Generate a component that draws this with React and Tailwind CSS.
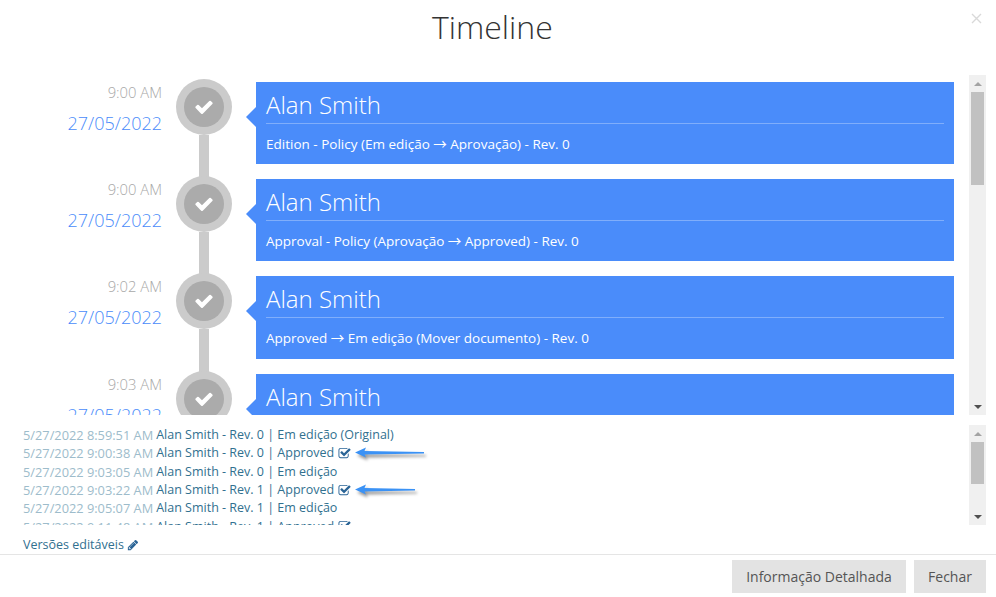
import React from 'react';

const events = [
    { time: '9:00 AM', parts: ['Edition - Policy (Em edição ', ' Aprovação) - Rev. 0'] },
    { time: '9:00 AM', parts: ['Approval - Policy (Aprovação ', ' Approved) - Rev. 0'] },
    { time: '9:02 AM', parts: ['Approved ', ' Em edição (Mover documento) - Rev. 0'] },
    { time: '9:03 AM', parts: ['Em edição - Policy - Rev. 1'] },
];

const versions = [
    { date: '5/27/2022 8:59:51 AM', info: 'Alan Smith - Rev. 0 | Em edição (Original)' },
    { date: '5/27/2022 9:00:38 AM', info: 'Alan Smith - Rev. 0 | Approved', approved: true, arrow: 70 },
    { date: '5/27/2022 9:03:05 AM', info: 'Alan Smith - Rev. 0 | Em edição' },
    { date: '5/27/2022 9:03:22 AM', info: 'Alan Smith - Rev. 1 | Approved', approved: true, arrow: 61 },
    { date: '5/27/2022 9:05:07 AM', info: 'Alan Smith - Rev. 1 | Em edição' },
    { date: '5/27/2022 9:11:48 AM', info: 'Alan Smith - Rev. 1 | Approved', approved: true },
];

const CheckIcon = ({ className }) => (
    <svg viewBox="0 0 1792 1792" fill="currentColor" className={className}>
        <path d="M1671 566q0 40-28 68l-724 724-136 136q-28 28-68 28t-68-28l-136-136-362-362q-28-28-28-68t28-68l136-136q28-28 68-28t68 28l294 295 656-657q28-28 68-28t68 28l136 136q28 28 28 68z" />
    </svg>
);

const CheckSquareIcon = ({ className }) => (
    <svg viewBox="0 0 1792 1792" fill="currentColor" className={className}>
        <path d="M1472 930v318q0 119-84.5 203.5t-203.5 84.5h-832q-119 0-203.5-84.5t-84.5-203.5v-832q0-119 84.5-203.5t203.5-84.5h832q63 0 117 25 15 7 18 23 3 17-9 29l-49 49q-10 10-23 10-3 0-9-2-23-6-45-6h-832q-66 0-113 47t-47 113v832q0 66 47 113t113 47h832q66 0 113-47t47-113v-254q0-13 9-22l64-64q10-10 23-10 6 0 12 3 20 8 20 29zm231-489l-814 814q-24 24-57 24t-57-24l-430-430q-24-24-24-57t24-57l110-110q24-24 57-24t57 24l263 263 647-647q24-24 57-24t57 24l110 110q24 24 24 57t-24 57z" />
    </svg>
);

const PencilIcon = ({ className }) => (
    <svg viewBox="0 0 1792 1792" fill="currentColor" className={className}>
        <path d="M491 1536l91-91-235-235-91 91v107h128v128h107zm523-928q0-22-22-22-10 0-17 7l-542 542q-7 7-7 17 0 22 22 22 10 0 17-7l542-542q7-7 7-17zm-54-192l416 416-832 832h-416v-416zm683 96q0 53-37 90l-166 166-416-416 166-165q36-38 90-38 53 0 91 38l235 234q37 39 37 91z" />
    </svg>
);

const Scrollbar = ({ thumbHeight }) => (
    <div className="w-[17px] shrink-0 bg-[#f0f0f0] flex flex-col items-center">
        <div className="h-[17px] w-full flex items-center justify-center shrink-0">
            <div className="w-0 h-0 border-x-[4px] border-x-transparent border-b-[4px] border-b-[#a3a3a3]" />
        </div>
        <div className={`w-[13px] bg-[#c1c1c1] shrink-0 ${thumbHeight}`} />
        <div className="flex-1" />
        <div className="h-[17px] w-full flex items-center justify-center shrink-0">
            <div className="w-0 h-0 border-x-[4px] border-x-transparent border-t-[4px] border-t-[#505050]" />
        </div>
    </div>
);

// hand drawn annotation arrow with its soft shadow
const Arrow = ({ width }) => (
    <svg
        width={width + 4}
        height="14"
        viewBox={`0 0 ${width + 4} 14`}
        className="ml-[4px] shrink-0 overflow-visible drop-shadow-[2px_3px_1.5px_rgba(0,0,0,0.4)]"
    >
        <path d={`M0 6.5 L11 1.5 L9.5 5 L${width - 1} 6 L${width - 1} 7.5 L9.5 8.5 L11 11.5 Z`} fill="#3b92f5" />
    </svg>
);

const App = () => {
    return (
        <div className="w-[996px] h-[597px] bg-white overflow-hidden flex flex-col font-['Open_Sans',sans-serif] text-[#555]">
            <div className="h-[75px] shrink-0 flex justify-between pl-[432px] pr-[14px]">
                <h1 className="text-[32px] font-light leading-[54px] text-[#333]">Timeline</h1>
                <svg width="11" height="11" viewBox="0 0 11 11" className="mt-[13px]" stroke="#d9d9d9" strokeWidth="1.4">
                    <path d="M1 1 L10 10 M10 1 L1 10" />
                </svg>
            </div>

            <div className="h-[340px] shrink-0 flex pr-[10px]">
                <div className="flex-1 min-w-0 overflow-hidden pt-[7px]">
                    {events.map((ev, i) => (
                        <div key={i} className="flex h-[97.2px]">
                            <div className="w-[162px] shrink-0 text-right font-light">
                                <div className="text-[14.8px] leading-[20px] text-[#a8a8a8]">{ev.time}</div>
                                <div className="text-[18px] leading-[24px] mt-[9px] text-[#4a8cfa]">27/05/2022</div>
                            </div>
                            <div className="w-[56px] ml-[14px] shrink-0 flex flex-col items-center -mt-[3px]">
                                <div className="w-[56px] h-[56px] shrink-0 rounded-full bg-[#cbcbcb] flex items-center justify-center">
                                    <div className="w-[40px] h-[40px] rounded-full bg-[#ababab] flex items-center justify-center">
                                        <CheckIcon className="text-white w-[20px] h-[20px]" />
                                    </div>
                                </div>
                                <div className="w-[10px] h-[45px] shrink-0 bg-[#cbcbcb]" />
                            </div>
                            <div className="relative ml-[24px] w-[698px] h-[82.2px] shrink-0 bg-[#4a8cfa] px-[10px] text-white">
                                <div className="absolute -left-[10px] top-[25px] w-0 h-0 border-y-[10px] border-y-transparent border-r-[10px] border-r-[#4a8cfa]" />
                                <div className="h-[42px] border-b border-white/30 text-[24px] font-light leading-[46px]">Alan Smith</div>
                                <p className="text-[13.5px] leading-[20px] mt-[10px] whitespace-pre">
                                    {ev.parts[0]}
                                    {ev.parts[1] && <span className="font-['Noto_Sans_CJK_JP',sans-serif] leading-none">→</span>}
                                    {ev.parts[1]}
                                </p>
                            </div>
                        </div>
                    ))}
                </div>
                <Scrollbar thumbHeight="h-[93px]" />
            </div>

            <div className="h-[100px] mt-[10px] shrink-0 flex pl-[23px] pr-[10px]">
                <div className="flex-1 min-w-0 overflow-hidden pt-[1px]">
                    {versions.map((v, i) => (
                        <div key={i} className="h-[18.33px] flex items-center leading-[18px] text-[#31708f] whitespace-nowrap">
                            <span className="text-[12.8px] text-[#9dbccb] mr-[3px]">{v.date}</span>
                            <span className="text-[12.5px]">{v.info}</span>
                            {v.approved && <CheckSquareIcon className="ml-[4px] w-[13px] h-[13px] text-[#2a6496]" />}
                            {v.arrow && <Arrow width={v.arrow} />}
                        </div>
                    ))}
                </div>
                <Scrollbar thumbHeight="h-[42px]" />
            </div>

            <div className="h-[29px] shrink-0 flex items-center pt-[11px] pl-[23px] text-[12.5px] text-[#31708f]">
                Versões editáveis
                <PencilIcon className="ml-[3px] w-[12px] h-[12px] text-[#2a6496]" />
            </div>

            <div className="flex-1 border-t border-[#e5e5e5] flex justify-end items-start gap-[8px] pt-[5px] pr-[10px]">
                <button className="h-[33px] w-[174px] bg-[#e3e3e3] text-[14px] text-[#555]">Informação Detalhada</button>
                <button className="h-[33px] w-[72px] bg-[#e3e3e3] text-[14px] text-[#555]">Fechar</button>
            </div>
        </div>
    );
};

export default App;
